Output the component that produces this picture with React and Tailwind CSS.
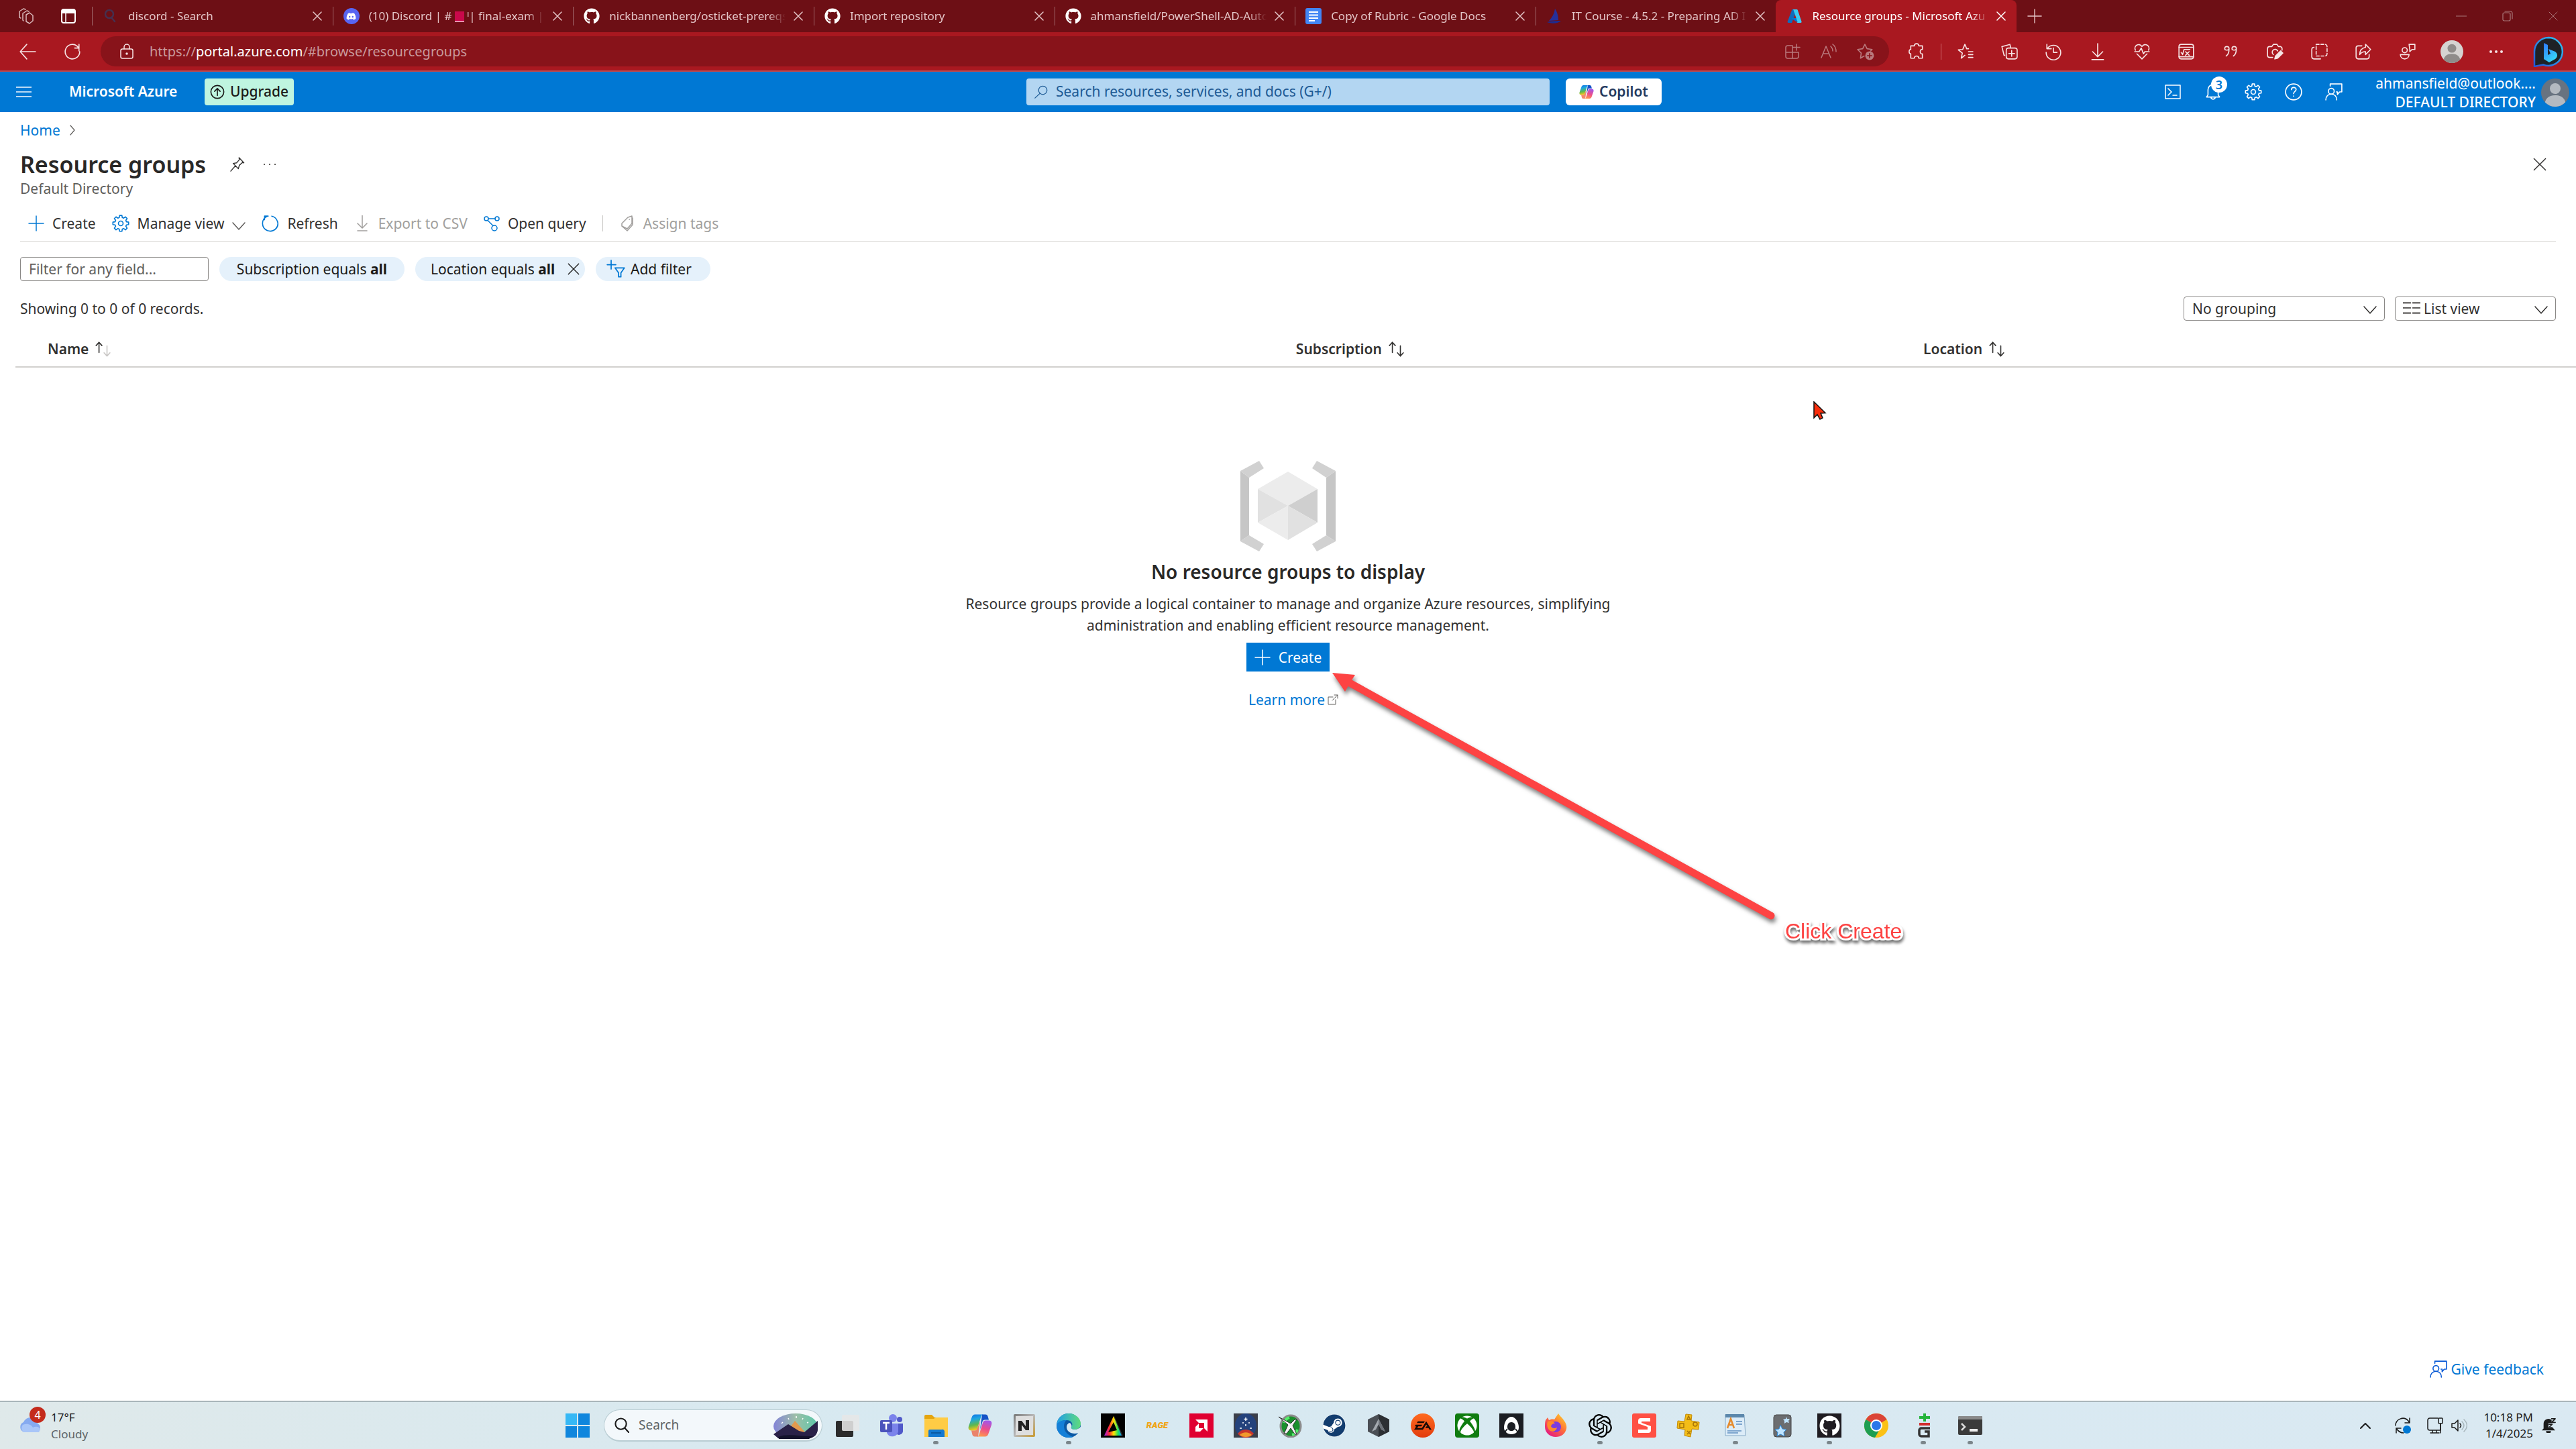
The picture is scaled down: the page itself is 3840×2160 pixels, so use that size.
import React from "react";
import { FaGithub, FaDiscord, FaXbox, FaSteam } from "react-icons/fa";
import { SiOpenai, SiEa } from "react-icons/si";

/* ---------- icon helpers ---------- */

function Line({ size = 24, sw = 1.5, className = "", children, box = 24 }) {
  return (
    <svg
      width={size}
      height={size}
      viewBox={`0 0 ${box} ${box}`}
      fill="none"
      stroke="currentColor"
      strokeWidth={sw}
      strokeLinecap="round"
      strokeLinejoin="round"
      className={`shrink-0 ${className}`}
      aria-hidden="true"
    >
      {children}
    </svg>
  );
}

const Close = ({ size = 14, sw = 1.5, className }) => (
  <Line size={size} sw={sw} box={14} className={className}>
    <path d="M1 1l12 12M13 1L1 13" />
  </Line>
);
const Plus = ({ size = 24, sw = 1.5, className }) => (
  <Line size={size} sw={sw} className={className}>
    <path d="M12 1v22M1 12h22" />
  </Line>
);
const ChevronDown = ({ className }) => (
  <Line size={20} box={20} sw={1.5} className={className}>
    <path d="M1 5l9 10 9-10" />
  </Line>
);
const Gear = ({ size = 26, sw = 1.5, className }) => (
  <Line size={size} sw={sw} className={className}>
    <circle cx="12" cy="12" r="3.2" />
    <path d="M10.400 1h3.200l.5 3 1.900.8L18.500 3l2.300 2.300L19 7.900l.8 1.900 3 .5v3.300l-3 .5-.8 1.900 1.800 2.600-2.300 2.300-2.500-1.800-1.900.8-.5 3h-3.200l-.5-3-1.900-.8-2.500 1.800-2.300-2.300L5 16l-.8-1.900-3-.5v-3.300l3-.5L5 7.900 3.200 5.300 5.500 3 8 4.800 9.900 4z" />
  </Line>
);
const Feedback = ({ size = 24, sw = 1.5, className }) => (
  <Line size={size} sw={sw} className={className}>
    <path d="M7 4V1h16v11h-3l-3 3.500V12h-1.500" />
    <circle cx="8.500" cy="11" r="4" />
    <path d="M1 23c0-5 3.300-8 7.500-8s7.500 3 7.500 8" />
  </Line>
);

const CopilotLogo = ({ size = 24, id }) => (
  <svg width={size} height={size} viewBox="0 0 36 36" className="shrink-0" aria-hidden="true">
    <defs>
      <linearGradient id={`${id}a`} x1="0" y1="0" x2="0.2" y2="1">
        <stop offset="0" stopColor="#0f6fe8" />
        <stop offset="0.35" stopColor="#1ea7e0" />
        <stop offset="0.7" stopColor="#5fb84f" />
        <stop offset="1" stopColor="#f2c81c" />
      </linearGradient>
      <linearGradient id={`${id}b`} x1="0.6" y1="0" x2="0.3" y2="1">
        <stop offset="0" stopColor="#a357e8" />
        <stop offset="0.5" stopColor="#ec4d8c" />
        <stop offset="1" stopColor="#ff9a4a" />
      </linearGradient>
    </defs>
    <path d="M21 1.500h5c2 0 3 1.200 3.600 3l1.400 5h-6c-2 0-3 1-3.600 3L18 24" fill="#1553c7" />
    <path d="M10.500 1.500H23c-2 0-3 1.500-3.500 3L14 22c-.8 2.500-2 3.500-4.500 3.500H5c-4 0-5-3-4-6.500L5.500 6c1-3 2.500-4.500 5-4.500z" fill={`url(#${id}a)`} />
    <path d="M25.500 34.500H13c2 0 3-1.500 3.500-3L22 14c.8-2.500 2-3.500 4.500-3.500H31c4 0 5 3 4 6.500L30.500 30c-1 3-2.500 4.500-5 4.500z" fill={`url(#${id}b)`} />
    <path d="M15 34.500h-5c-2 0-3-1.200-3.600-3L5 25.500h5c2 0 3-1 3.600-3L18 12" fill="#f0603c" opacity=".75" />
  </svg>
);

const Avatar = ({ size, bg, fg }) => (
  <svg width={size} height={size} viewBox="0 0 42 42" className="shrink-0 rounded-full" aria-hidden="true">
    <rect width="42" height="42" fill={bg} />
    <circle cx="21" cy="15" r="8" fill={fg} />
    <path d="M5 42c0-12 6-17 16-17s16 5 16 17z" fill={fg} />
  </svg>
);

/* ---------- browser tabs ---------- */

const GithubFav = () => <FaGithub size={24} className="shrink-0 text-white" />;

const TABS = [
  {
    title: "discord - Search",
    icon: (
      <Line size={24} sw={2.5} className="text-[#46304f]">
        <circle cx="10" cy="9" r="6" />
        <path d="M13 14l5 6" />
      </Line>
    ),
  },
  {
    title: (
      <>
        (10) Discord | # <span className="inline-block h-4 w-3.5 border-b border-white bg-[#c9094b] align-middle" /> ᑊ| final-exam |
      </>
    ),
    icon: (
      <span className="flex size-6 shrink-0 items-center justify-center rounded-full bg-[#5865f2] text-white">
        <FaDiscord size={15} />
      </span>
    ),
  },
  { title: "nickbannenberg/osticket-prereqs", icon: <GithubFav /> },
  { title: "Import repository", icon: <GithubFav /> },
  { title: "ahmansfield/PowerShell-AD-Auto", icon: <GithubFav /> },
  {
    title: "Copy of Rubric - Google Docs",
    icon: (
      <svg width="24" height="24" viewBox="0 0 24 24" className="shrink-0" aria-hidden="true">
        <rect width="24" height="24" rx="3" fill="#4285f4" />
        <path d="M5 6h14M5 10.500h14M5 15h14M5 19h9" stroke="#fff" strokeWidth="2.200" />
      </svg>
    ),
  },
  {
    title: "IT Course - 4.5.2 - Preparing AD I",
    icon: (
      <svg width="24" height="24" viewBox="0 0 24 24" className="shrink-0" aria-hidden="true">
        <path d="M13 1c4 6 5 12 5 17l-14 1C9 14 12 8 13 1z" fill="#25309b" />
        <path d="M1 21c7-2 14-2 21-2-4 4-12 5-21 2z" fill="#1e2b8f" />
      </svg>
    ),
  },
  {
    title: "Resource groups - Microsoft Azu",
    active: true,
    icon: (
      <svg width="24" height="24" viewBox="0 0 24 24" className="shrink-0" aria-hidden="true">
        <path d="M8.500 2h7L8 22H3c-1 0-1.700-.9-1.300-2z" fill="#0f6cbd" />
        <path d="M8 15h10l-2 6-8-5z" fill="#0078d4" />
        <path d="M9.500 2h6c.6 0 1 .3 1.200.8L22.500 20c.4 1-.3 2-1.300 2H15c1 0 1.600-1 1.300-2L10.500 3c-.2-.6-.5-1-1-1z" fill="#3ccbf4" />
      </svg>
    ),
  },
];

function TabStrip() {
  return (
    <div className="flex h-12 items-center bg-[#6d0f15] text-[#e3c4c6]">
      <div className="flex w-[137px] shrink-0 items-center gap-[39px] pl-[27px]">
        <Line size={24} sw={1.5} className="text-[#d9b9bb]">
          <path d="M12 10l5-3 5 4v8l-5 4-5-3zM8 19l-1-1V8l6-4 3 1M4 15l-2-1V5l6-4 3 1" />
        </Line>
        <svg width="24" height="24" viewBox="0 0 24 24" className="shrink-0" aria-hidden="true">
          <rect x="2" y="2" width="20" height="20" rx="3" fill="none" stroke="#fff" strokeWidth="2" />
          <path d="M2 3h20v5H2z" fill="#fff" />
          <path d="M8 8v13" stroke="#fff" strokeWidth="1.500" />
        </svg>
      </div>
      <div className="grid w-[2869px] min-w-0 grid-cols-8 self-stretch">
        {TABS.map((t, i) => (
          <div
            key={i}
            className={
              t.active
                ? "flex min-w-0 items-center rounded-t-lg bg-[#a91820] text-white"
                : "flex min-w-0 items-center"
            }
          >
            <span className={t.active ? "h-7 w-px shrink-0" : "h-7 w-px shrink-0 bg-[#a0676b]"} />
            <button className="flex min-w-0 flex-1 items-center gap-3.5 pl-[15px] text-left">
              {t.icon}
              <span className="min-w-0 flex-1 overflow-hidden whitespace-nowrap text-[17px] leading-6 [mask-image:linear-gradient(to_right,black_90%,transparent)]">
                {t.title}
              </span>
            </button>
            <button aria-label="Close tab" className="mr-4 ml-3 shrink-0">
              <Close />
            </button>
          </div>
        ))}
      </div>
      <button aria-label="New tab" className="ml-4 shrink-0">
        <Plus size={22} />
      </button>
      <div className="ml-auto flex items-center gap-[53px] pr-[27px] text-[#a9787b]">
        <button aria-label="Minimize">
          <Line size={16} box={16} sw={1}>
            <path d="M0 8h16" />
          </Line>
        </button>
        <button aria-label="Restore">
          <Line size={16} box={16} sw={1.2}>
            <rect x="1" y="3" width="11" height="12" rx="2" />
            <path d="M4 1h8a3 3 0 013 3v8" />
          </Line>
        </button>
        <button aria-label="Close window">
          <Close sw={1} />
        </button>
      </div>
    </div>
  );
}

/* ---------- address bar ---------- */

const TOOLBAR = [
  ["Favorites", <><path d="M12 17l-5 4 1.500-7L3 9.500l6-.5 3-7 2.500 6h2.500M17 12h6M17 16h6M17 20h6" /></>],
  ["Collections", <><path d="M6 17H5L2 5l11-3 1 4" /><rect x="8" y="7" width="15" height="15" rx="3" /><path d="M15.500 10.500v8M11.500 14.500h8" /></>],
  ["History", <><path d="M3 2v6h6M3.500 8A10 10 0 112 13M12 7v6h5" /></>],
  ["Downloads", <><path d="M12 1v17M5 12l7 7 7-7M4 23h16" /></>],
  ["Performance", <><path d="M3 10C0 4 8-1 12 5c4-6 12-1 9 5M5 15l7 7 7-7M2 12h6l3-5 3 8 2-3h6" /></>],
  ["Math solver", <><rect x="2" y="2" width="20" height="20" rx="3" /><path d="M2 6h20M2 19h20M5 13l2 3 2-7h8M11 12l5 5M16 12l-5 5" /></>],
  ["Citations", <><path d="M4 8a3 3 0 116 0c0 5-1 8-4 10M10 8c0 2-6 3-6 0M14 8a3 3 0 116 0c0 5-1 8-4 10M20 8c0 2-6 3-6 0" /></>],
  ["Screenshot", <><path d="M9 20H5a3 3 0 01-3-3V8a3 3 0 013-3h3l2-3h5l2 3h3a3 3 0 012 3v2M10 16a4 4 0 116-5" /><path d="M13 18l7-7 3 3-7 7-4 1z" fill="currentColor" /></>],
  ["Web select", <><path d="M8 2h12a3 3 0 013 3v10a3 3 0 01-3 3H8z" strokeDasharray="4 2.500" /><path d="M5 6a3 3 0 00-3 3v10a3 3 0 003 3h9" /></>],
  ["Share", <><path d="M10 4H5a3 3 0 00-3 3v12a3 3 0 003 3h12a3 3 0 003-3v-3M15 2l7 7-7 7v-4c-4 0-6 1-8 4 0-6 3-9 8-10z" /></>],
  ["Social", <><circle cx="8" cy="10" r="3.500" /><path d="M2 16h12c0 8-12 8-12 0zM14 2h8v7h-4l-3 3V9z" /></>],
];

function AddressBar() {
  return (
    <div className="flex h-[59px] items-center border-b-2 border-[#bb4a50] bg-[#a91820] text-[#f6e3e4]">
      <div className="flex w-[150px] shrink-0 items-center gap-[41px] pl-7">
        <button aria-label="Back">
          <Line size={26}>
            <path d="M23 12H2M11 2L2 12l9 10" />
          </Line>
        </button>
        <button aria-label="Reload">
          <Line size={26}>
            <path d="M21 5v6M22 12a10 10 0 11-4-8l3 3M21 2v5h-6" />
          </Line>
        </button>
      </div>
      <div className="flex h-[45px] min-w-0 flex-1 items-center rounded-full bg-[#88131a] pr-[22px] pl-[27px]">
        <Line size={24}>
          <rect x="3" y="8" width="18" height="14" rx="2.500" />
          <path d="M8 8V5a4 4 0 018 0v3" />
          <circle cx="12" cy="15" r="1" fill="currentColor" />
        </Line>
        <a href="#browse" className="ml-[22px] flex-1 truncate text-xl text-[#c9999c]">
          https://<span className="text-white">portal.azure.com</span>/#browse/resourcegroups
        </a>
        <div className="flex items-center gap-[30px] text-[#b9797d]">
          <button aria-label="App available">
            <Line size={24}>
              <path d="M12 3H5a3 3 0 00-3 3v13a3 3 0 003 3h13a3 3 0 003-3v-6H2M12 3v19M18 1v9M13 5.500h10" />
            </Line>
          </button>
          <button aria-label="Read aloud">
            <Line size={24}>
              <path d="M1 21L8 4l7 17M4 15h8M15 4c2 2 3 4 3 7M18 1c4 3 5 6 5 11" />
            </Line>
          </button>
          <button aria-label="Add to favorites">
            <Line size={26}>
              <path d="M10 18l-5 3 1-7-5-5 7-1 3-6 3 6 7 1-2 2" />
              <circle cx="17.500" cy="17.500" r="6" fill="currentColor" stroke="none" />
              <path d="M17.500 14.500v6M14.500 17.500h6" stroke="#88131a" />
            </Line>
          </button>
        </div>
      </div>
      <div className="flex shrink-0 items-center pl-7">
        <button aria-label="Extensions">
          <Line size={26}>
            <path d="M9 4a3 3 0 016 0h5v5c-4-1-4 7 0 6v6h-5c0-4-6-4-6 0H4v-6c-3 0-3-6 0-6V4z" />
          </Line>
        </button>
        <span className="mr-0.5 ml-[23px] h-6 w-px bg-[#cf6a70]" />
        {TOOLBAR.map(([label, path]) => (
          <button key={label} aria-label={label} className="flex w-[66px] justify-center">
            <Line size={26}>{path}</Line>
          </button>
        ))}
        <button aria-label="Profile" className="flex w-[66px] justify-center">
          <Avatar size={34} bg="#d5d3d1" fg="#8f8c8a" />
        </button>
        <button aria-label="More" className="flex w-[66px] justify-center">
          <Line size={24} sw={0}>
            <g fill="currentColor">
              <circle cx="4" cy="12" r="2" />
              <circle cx="12" cy="12" r="2" />
              <circle cx="20" cy="12" r="2" />
            </g>
          </Line>
        </button>
        <button aria-label="Bing chat" className="mr-[18px] ml-[22px]">
          <svg width="46" height="46" viewBox="0 0 46 46" aria-hidden="true">
            <defs>
              <linearGradient id="bingRing" x1="0" y1="1" x2="1" y2="0">
                <stop offset="0" stopColor="#2356d8" />
                <stop offset="1" stopColor="#35c5f0" />
              </linearGradient>
              <linearGradient id="bingB" x1="0" y1="0" x2="0.6" y2="1">
                <stop offset="0" stopColor="#2f7bff" />
                <stop offset="1" stopColor="#37d6f5" />
              </linearGradient>
            </defs>
            <path d="M23 2a21 21 0 11-8 40.500L2 45V23A21 21 0 0123 2z" fill="#1e2226" stroke="url(#bingRing)" strokeWidth="2.500" />
            <path d="M16 10l6 3v15l4-2-3-7 10 4c4 3 4 8 0 11l-9 5-8-5z" fill="url(#bingB)" />
          </svg>
        </button>
      </div>
    </div>
  );
}

/* ---------- portal header ---------- */

function PortalHeader() {
  return (
    <header className="flex h-[60px] items-center bg-[#0078d4] text-white">
      <div className="flex flex-1 items-center">
        <button aria-label="Menu" className="ml-6 flex w-[23px] flex-col gap-[5px]">
          <span className="h-0.5 bg-[#b9d9f3]" />
          <span className="h-0.5 bg-[#b9d9f3]" />
          <span className="h-0.5 bg-[#b9d9f3]" />
        </button>
        <a href="#home" className="ml-14 w-[202px] text-[21px] font-semibold whitespace-nowrap">
          Microsoft Azure
        </a>
        <button className="flex h-10 items-center gap-2 rounded-sm bg-[#bff5e0] px-2 text-[21px] font-medium text-[#1b1a19]">
          <Line size={22} sw={1.8}>
            <circle cx="12" cy="12" r="10.500" />
            <path d="M12 18V7M7.500 11L12 6.500l4.500 4.500" />
          </Line>
          Upgrade
        </button>
      </div>
      <label className="flex h-10 w-[780px] shrink-0 items-center gap-3 rounded-sm bg-[#b3d6f2] px-3 text-[#1d5a94]">
        <Line size={20}>
          <circle cx="15" cy="9" r="7.500" />
          <path d="M10 14.500L1 23" />
        </Line>
        <input
          type="text"
          aria-label="Search resources, services, and docs"
          placeholder="Search resources, services, and docs (G+/)"
          className="w-full bg-transparent text-[21px] outline-none placeholder:text-[#1d5a94]"
        />
      </label>
      <div className="flex flex-1 items-center">
        <button className="ml-6 flex h-10 items-center gap-2 rounded-md bg-white px-5 text-[21px] font-semibold text-[#243a5e]">
          <CopilotLogo size={22} id="cpH" />
          Copilot
        </button>
        <div className="ml-auto flex items-center">
          <button aria-label="Cloud Shell" className="flex w-[60px] justify-center">
            <Line size={24}>
              <rect x="1" y="2" width="22" height="20" />
              <path d="M5 7l5 5-5 5M12 17h6" />
            </Line>
          </button>
          <button aria-label="Notifications" className="relative flex w-[60px] justify-center">
            <Line size={26}>
              <path d="M3 19h18l-2-3V9a7 7 0 00-14 0v7zM9 19a3 3 0 006 0" />
            </Line>
            <span className="absolute -top-2.5 left-[27px] flex size-6 items-center justify-center rounded-full bg-white text-lg font-semibold text-[#0078d4]">
              3
            </span>
          </button>
          <button aria-label="Settings" className="flex w-[60px] justify-center">
            <Gear />
          </button>
          <button aria-label="Help" className="flex w-[60px] justify-center">
            <Line size={26}>
              <circle cx="12" cy="12" r="11" />
              <path d="M9 9c0-4 6.500-4 6.500-.5 0 3-3.500 3-3.500 6M12 17.500v.5" />
            </Line>
          </button>
          <button aria-label="Feedback" className="flex w-[60px] justify-center">
            <Feedback size={26} />
          </button>
          <button className="flex w-[321px] items-center justify-end gap-2 pt-0.5 text-right text-[21px] leading-7">
            <span>
              <span className="block">ahmansfield@outlook....</span>
              <span className="block font-medium">DEFAULT DIRECTORY</span>
            </span>
            <Avatar size={42} bg="#687380" fg="#b4bac1" />
          </button>
          <span className="w-2.5" />
        </div>
      </div>
    </header>
  );
}

/* ---------- page ---------- */

function Command({ icon, children, disabled, className = "" }) {
  return (
    <button
      disabled={disabled}
      className={`flex items-center gap-3 whitespace-nowrap ${disabled ? "text-[#a19f9d]" : ""} ${className}`}
    >
      {icon}
      {children}
    </button>
  );
}

function Sort({ dim }) {
  return (
    <Line size={26} sw={1.5} className="text-[#323130]">
      <path d="M7 17V3M3 7.500L7 3l4 4.500" />
      <path d="M18 8v14M14 17.500l4 4.500 4-4.500" className={dim ? "text-[#c8c6c4]" : ""} stroke="currentColor" />
    </Line>
  );
}

function EmptyArt() {
  return (
    <svg width="142" height="135" viewBox="0 0 142 135" aria-hidden="true">
      <path d="M0 15l13 10v86L0 120z" fill="#c6c6c6" />
      <path d="M142 15l-14 10v86l14 9z" fill="#c6c6c6" />
      <path d="M0 15L28 0l7 11-22 14zM142 15L114 0l-7 11 21 14zM0 120l28 15 7-11-22-13zM142 120l-28 15-7-11 21-13z" fill="#d1d1d1" />
      <path d="M26 42l45-26 44 26-44 25z" fill="#ececec" />
      <path d="M26 42l45 25-45 25z" fill="#e1e1e1" />
      <path d="M115 42L71 67l44 25z" fill="#cfcfcf" />
      <path d="M26 92l45-25v51z" fill="#ececec" />
      <path d="M115 92L71 67v51z" fill="#e1e1e1" />
    </svg>
  );
}

function Annotations() {
  return (
    <>
      <svg
        width="680"
        height="390"
        viewBox="0 0 680 390"
        className="pointer-events-none absolute top-[831px] left-1/2 ml-[60px] drop-shadow-[2px_5px_3px_rgba(0,0,0,0.5)]"
        aria-hidden="true"
      >
        <path d="M32 20L660 367" stroke="#fd4343" strokeWidth="11" strokeLinecap="round" />
        <path d="M6 5l34 3-7 11-8 14z" fill="#fd4343" />
      </svg>
      <span className="pointer-events-none absolute top-[1203px] left-1/2 ml-[741px] text-[32px] leading-9 whitespace-nowrap text-[#fd4343] [font-family:'Liberation_Sans',sans-serif] [paint-order:stroke_fill] [-webkit-text-stroke:6px_white] drop-shadow-[1px_4px_2px_rgba(0,0,0,0.55)]">
        Click Create
      </span>
      <svg
        width="20"
        height="29"
        viewBox="0 0 20 29"
        className="pointer-events-none absolute top-[431px] left-1/2 ml-[783px]"
        aria-hidden="true"
      >
        <path d="M1 1v24l5-5 4 7 4-2-3-7 7-.500z" fill="#f92d0b" stroke="#111" strokeWidth="1.500" />
      </svg>
    </>
  );
}

function Page() {
  return (
    <main className="relative flex flex-1 flex-col bg-white text-[21px] leading-7 text-[#323130]">
      <nav className="flex h-[54px] items-center gap-2.5 pl-[30px]">
        <a href="#home" className="text-[#0078d4]">
          Home
        </a>
        <Line size={16} box={16} sw={1.2} className="text-[#605e5c]">
          <path d="M5 1l6 7-6 7" />
        </Line>
      </nav>
      <div className="flex h-12 items-center pr-11 pl-[30px]">
        <h1 className="text-[34px] leading-[48px] font-semibold text-[#292827]">Resource groups</h1>
        <button aria-label="Pin" className="ml-9">
          <Line size={22} sw={1.5}>
            <path d="M1 23l7.500-8.500M5 10.500l8.500 8.500 1.500-5.500L20 9l2.500.5L14.500 1l.5 3.500-4.500 5z" />
          </Line>
        </button>
        <button aria-label="More actions" className="ml-7 flex gap-1.5">
          <span className="size-0.5 bg-[#605e5c]" />
          <span className="size-0.5 bg-[#605e5c]" />
          <span className="size-0.5 bg-[#605e5c]" />
        </button>
        <button aria-label="Close" className="ml-auto">
          <Close size={20} sw={1} />
        </button>
      </div>
      <p className="h-6 pl-[30px] leading-6 text-[#605e5c]">Default Directory</p>

      <div className="mx-[30px] flex h-[67px] items-center border-b border-[#d2d0ce] pt-3.5 pl-3">
        <Command icon={<Plus className="text-[#0078d4]" />}>Create</Command>
        <Command className="ml-6" icon={<Gear className="text-[#0078d4]" />}>
          Manage view
          <ChevronDown className="mt-2 text-[#605e5c]" />
        </Command>
        <Command
          className="ml-6"
          icon={
            <Line size={26} className="text-[#0078d4]">
              <path d="M9 2H4v5M8 2C-1 6-1 18 8 22c9 3 16-5 14-12-1-4-4-7-8-8" />
            </Line>
          }
        >
          Refresh
        </Command>
        <Command
          disabled
          className="ml-6"
          icon={
            <Line size={24}>
              <path d="M12 0v18M5 12l7 7 7-7M5 23h14" />
            </Line>
          }
        >
          Export to CSV
        </Command>
        <Command
          className="ml-6"
          icon={
            <Line size={24} className="text-[#0078d4]">
              <circle cx="4" cy="5" r="3" />
              <circle cx="20" cy="5" r="3" />
              <circle cx="16" cy="19" r="4" />
              <path d="M7 5h10M6 7.500l8 8" />
            </Line>
          }
        >
          Open query
        </Command>
        <span className="mx-6 h-6 w-px bg-[#c8c6c4]" />
        <Command
          disabled
          icon={
            <Line size={24}>
              <path d="M4 12l9-9 6-2v11l-7 8-8-4zM4 16l8 7 8-9V4M15 6h.5" />
            </Line>
          }
        >
          Assign tags
        </Command>
      </div>

      <div className="mx-[30px] mt-[23px] flex h-9 items-stretch">
        <input
          type="text"
          aria-label="Filter"
          placeholder="Filter for any field..."
          className="w-[281px] rounded-sm border border-[#8a8886] px-3 outline-none placeholder:text-[#605e5c]"
        />
        <button className="ml-4 w-[276px] rounded-full bg-[#e5f1fb] whitespace-nowrap text-[#1b1a19]">
          Subscription equals <b className="font-bold">all</b>
        </button>
        <div className="ml-4 flex w-[253px] items-center justify-between rounded-full bg-[#e5f1fb] pr-2 pl-[23px] whitespace-nowrap text-[#1b1a19]">
          <button>
            Location equals <b className="font-bold">all</b>
          </button>
          <button aria-label="Remove location filter">
            <Close size={18} sw={1} />
          </button>
        </div>
        <button className="ml-4 flex w-[171px] items-center gap-2 rounded-full bg-[#e5f1fb] pl-4 whitespace-nowrap text-[#1b1a19]">
          <Line size={28} className="text-[#0078d4]">
            <path d="M6 1v11M1 6.500h11M11 10.500h12l-4.500 6.500v5h-3v-5z" />
          </Line>
          Add filter
        </button>
      </div>

      <div className="mt-[23px] flex h-9 items-center pr-[30px] pl-[30px]">
        <p className="mr-auto">Showing 0 to 0 of 0 records.</p>
        <div className="relative mr-[15px] w-[300px]">
          <select aria-label="Grouping" className="h-9 w-full appearance-none rounded-sm border border-[#8a8886] bg-white pl-3">
            <option>No grouping</option>
          </select>
          <ChevronDown className="pointer-events-none absolute top-2.5 right-3" />
        </div>
        <div className="relative w-60">
          <select aria-label="View" className="h-9 w-full appearance-none rounded-sm border border-[#8a8886] bg-white pl-[42px]">
            <option>List view</option>
          </select>
          <Line size={26} sw={2} className="pointer-events-none absolute top-1 left-3 text-[#605e5c]">
            <path d="M0 5h11M13 5h11M0 12h11M13 12h11M0 19h11M13 19h11" strokeLinecap="butt" />
          </Line>
          <ChevronDown className="pointer-events-none absolute top-2.5 right-3" />
        </div>
      </div>

      <div className="mt-4 pl-[23px]">
        <table className="w-full table-fixed border-b-2 border-[#d2d0ce] text-left">
          <colgroup>
            <col className="w-[49.800%]" />
            <col className="w-[24.500%]" />
            <col />
          </colgroup>
          <thead>
            <tr className="h-[53px]">
              {["Name", "Subscription", "Location"].map((h, i) => (
                <th key={h} className={i === 0 ? "pl-12 font-semibold" : "pl-2 font-semibold"}>
                  <button className="flex items-center gap-2">
                    {h}
                    <Sort dim={i === 0} />
                  </button>
                </th>
              ))}
            </tr>
          </thead>
        </table>
      </div>

      <section className="mt-[139px] flex flex-col items-center text-center">
        <EmptyArt />
        <h2 className="mt-3 text-[28px] leading-9 font-semibold text-[#292827]">No resource groups to display</h2>
        <p className="mt-3.5 w-[1000px] leading-8">
          Resource groups provide a logical container to manage and organize Azure resources, simplifying administration and
          enabling efficient resource management.
        </p>
        <button className="mt-2.5 flex h-[43px] items-center gap-3 bg-[#0078d4] px-3 text-white">
          <Plus />
          Create
        </button>
        <a href="#learn" className="mt-7 ml-4 flex items-center gap-1 text-[#0078d4]">
          Learn more
          <Line size={16} box={16} sw={1} className="text-[#605e5c]">
            <path d="M8 4H1v11h11V8M7 9l8-8M10 1h5v5" />
          </Line>
        </a>
      </section>

      <a href="#feedback" className="mt-auto mr-12 mb-[33px] flex items-center gap-1.5 self-end text-[#0078d4]">
        <Feedback size={26} className="text-[#0a5bd6]" />
        Give feedback
      </a>
      <Annotations />
    </main>
  );
}

/* ---------- taskbar ---------- */

const Ico = ({ children, size = 36 }) => (
  <svg width={size} height={size} viewBox="0 0 36 36" className="shrink-0" aria-hidden="true">
    {children}
  </svg>
);

const APPS = [
  ["Task view", <Ico><rect x="1" y="11" width="26" height="24" rx="2" fill="#2b2b2b" /><rect x="10" y="2" width="26" height="24" rx="2" fill="#e6e6e6" opacity=".88" /></Ico>],
  ["Teams", <Ico><circle cx="20" cy="7" r="6" fill="#7b83eb" /><circle cx="30" cy="9" r="4" fill="#5059c9" /><path d="M24 15h11v10a6 6 0 01-9 6z" fill="#5059c9" /><path d="M11 15h17v12a9 9 0 01-17 2z" fill="#7b83eb" /><rect x="1" y="10" width="18" height="18" rx="2" fill="#4b53bc" /><path d="M5 14h10M10 14v10" stroke="#fff" strokeWidth="2.500" /></Ico>],
  ["File Explorer", <Ico><path d="M1 4a2 2 0 012-2h9l4 4h17a3 3 0 013 3v26H1z" fill="#e5a50f" /><path d="M1 8h14l3-2h18v29H1z" fill="#ffcc45" /><path d="M7 35V26a2 2 0 012-2h18a3 3 0 014 3v8z" fill="#1279d2" /><path d="M11 29h15" stroke="#084f91" strokeWidth="1.500" /></Ico>, true],
  ["Copilot", <CopilotLogo size={36} id="cpT" />],
  ["N launcher", <Ico><defs><linearGradient id="nl" x1="0" y1="0" x2="1" y2="1"><stop offset="0" stopColor="#777" /><stop offset=".5" stopColor="#b9b9b9" /><stop offset="1" stopColor="#c99a2e" /></linearGradient></defs><rect x="2" y="1" width="32" height="34" rx="2" fill="url(#nl)" /><rect x="5" y="4" width="26" height="28" fill="#dedede" /><path d="M9 26V11h5l6 8v-9h5v15h-5l-6-8v9z" fill="#222" /></Ico>],
  ["Edge", <Ico><defs><linearGradient id="eg1" x1="0" x2="1"><stop offset="0" stopColor="#1f9ee8" /><stop offset="1" stopColor="#5fdc7c" /></linearGradient></defs><circle cx="18" cy="18" r="18" fill="#0c59a4" /><path d="M0 18C1 7 8 0 18 0c11 0 18 8 18 15 0 6-4 9-9 9-4 0-6-2-5-4 4-5-1-10-7-10C8 10 1 13 0 18z" fill="url(#eg1)" /><path d="M0 18c1-5 7-8 15-8-6 4-7 20 10 25C12 39 0 31 0 18z" fill="#1480d8" /><path d="M22 20c-1 2 1 4 5 4 4 0 7-2 9-4v6l-3 3c-9 3-18-1-18-9 0-3 2-5 4-6 3 1 4 4 3 6z" fill="#d7e9f2" /></Ico>, true],
  ["Prism", <Ico><defs><linearGradient id="pr1" x1="0" x2="1"><stop offset="0" stopColor="#a020f0" /><stop offset=".3" stopColor="#ff2d2d" /><stop offset=".55" stopColor="#ffe600" /><stop offset=".8" stopColor="#20e060" /><stop offset="1" stopColor="#1090ff" /></linearGradient></defs><rect width="36" height="36" fill="#000" /><path d="M20 4l13 29h-9z" fill="#2a2a2a" /><path d="M19 4l12 29H5z" fill="url(#pr1)" /><path d="M19 13l5 12-13 3z" fill="#000" /></Ico>],
  ["Rage", <span className="text-[13px] font-black text-[#f0a416] italic [font-family:'Roboto',sans-serif]">RAGE</span>],
  ["AMD", <Ico><rect width="36" height="36" fill="#e00031" /><path d="M9 9h18v18l-5-5v-8h-8z" fill="#fff" /><path d="M9 20l5-5v7h7l-5 5H9z" fill="#fff" /></Ico>],
  ["Starfield", <Ico><rect width="36" height="36" fill="#3b3f4a" /><ellipse cx="18" cy="18" rx="16" ry="18" fill="#24427c" /><path d="M6 30c6-8 18-8 24 0-6 8-18 8-24 0z" fill="#c8352c" /><path d="M9 32c5-5 13-5 18 0-4 4-14 4-18 0z" fill="#f09a2c" /><path d="M18 6v5M15.500 8.500h5M18 16v3M9 22h3M24 22h3M13 14h2M22 14h2" stroke="#fff" strokeWidth="1.500" /></Ico>],
  ["X mouse", <Ico><ellipse cx="19" cy="19" rx="15" ry="16" fill="#1a8f2c" stroke="#8b8b8b" strokeWidth="3" /><path d="M9 14a12 12 0 018-8M29 24a12 12 0 01-8 8" stroke="#52f06a" strokeWidth="4" fill="none" /><path d="M1 5l14 12-6 13h4l6-8 6 9h3l-6-13 6-9h-3l-6 6z" fill="#f3f3f3" stroke="#333" /></Ico>],
  ["Steam", <span className="flex size-[34px] items-center justify-center rounded-full bg-white"><FaSteam size={34} className="text-[#123c6e]" /></span>],
  ["Armoury Crate", <Ico><path d="M18 1l16 8v18l-16 8-16-8V9z" fill="#4b4f55" /><path d="M18 1l16 8v18l-16 8z" fill="#2c2f33" /><path d="M18 8l10 19-6-3-4-8-4 8-6 3z" fill="#a4a9af" /><path d="M18 8l10 19-6-3-4-8z" fill="#6c7178" /></Ico>],
  ["EA", <span className="flex size-9 items-center justify-center rounded-full bg-linear-to-b from-[#ff6a1f] to-[#e23b0e]"><SiEa size={26} className="text-[#160a06]" /></span>],
  ["Xbox", <span className="flex size-9 items-center justify-center rounded-sm bg-[#107c10]"><FaXbox size={30} className="text-white" /></span>],
  ["Alienware", <Ico><rect width="36" height="36" fill="#1b1d22" /><path d="M18 5c6 0 11 8 11 16 0 6-5 10-11 10S7 27 7 21C7 13 12 5 18 5z" fill="#fff" /><path d="M18 13c4 0 6 3 6 7s-3 6-6 6-6-2-6-6 2-7 6-7z" fill="#1b1d22" /><path d="M12 23l-4 5M24 23l4 5" stroke="#1b1d22" strokeWidth="2" /></Ico>],
  ["Firefox", <Ico><defs><linearGradient id="ff1" x1="1" y1="0" x2=".2" y2="1"><stop offset="0" stopColor="#ffe226" /><stop offset=".5" stopColor="#ff7139" /><stop offset="1" stopColor="#e31587" /></linearGradient></defs><path d="M3 10l3-4 2 4c2-1 5-2 8-1 2-3 4-6 6-9 2 4 5 5 8 10 3 4 5 8 4 13-2 8-8 12-16 12S2 29 2 20c0-4 0-7 1-10z" fill="url(#ff1)" /><circle cx="18" cy="20" r="8" fill="#7b3be0" /><path d="M6 12c5-2 9 0 11 3-4 0-5 2-6 4 1 3 5 4 9 2-1 5-6 7-10 5-4-3-6-8-4-14z" fill="#ff8a2a" /></Ico>],
  ["ChatGPT", <SiOpenai size={35} className="text-black" />, true],
  ["Snagit", <Ico><rect width="36" height="36" rx="3" fill="#ff5044" /><path d="M27 7H13a4 4 0 00-4 4v4l14 5v4H9v5h15a4 4 0 004-4v-6l-14-5v-2h13z" fill="#fff" /></Ico>],
  ["PlayStation Plus", <Ico><path d="M14 1l9 1-1 9 12 2-1 11-10-1-2 12-9-2 1-9-12-2 1-11 10 1z" fill="#f3bd18" stroke="#c28a08" /><path d="M18 4l3 5h-5zM5 15h6v6H5zM16 26l5 5M21 26l-5 5" fill="none" stroke="#a87407" strokeWidth="1.500" /><circle cx="28" cy="16" r="3" fill="none" stroke="#a87407" strokeWidth="1.500" /></Ico>],
];

const APPS_END = [
  ["WordPad", <Ico><path d="M3 2h28l2 31H3z" fill="#dcecf8" stroke="#86a9c6" /><rect x="3" y="1" width="28" height="5" fill="#5b87ab" /><path d="M6 22l5-14 5 14M8 17h6" fill="none" stroke="#e58a2b" strokeWidth="2.500" /><path d="M19 12h9M19 16h9M6 26h21M6 29h16" stroke="#5f8fc0" strokeWidth="1.300" /></Ico>, true],
  ["Anki", <Ico><rect x="5" y="2" width="26" height="33" rx="4" fill="#6b6d70" stroke="#444" /><path d="M15 17l3 6 6 1-4 4 1 6-6-3-5 3 1-6-4-4 6-1z" fill="#bfe4ff" stroke="#2b83cf" /><path d="M24 5l1 3 4 0-2 3 1 3-4-1-3 2 0-4-2-2 4-1z" fill="#bfe4ff" /></Ico>],
  ["GitHub Desktop", <span className="flex size-9 items-center justify-center bg-[#1f1c21]"><FaGithub size={31} className="text-white" /></span>, true],
  ["Chrome", <Ico><circle cx="18" cy="18" r="18" fill="#fbc116" /><path d="M18 18L2.400 9A18 18 0 0133.600 9z" fill="#db4437" /><path d="M18 18L2.400 9A18 18 0 0016 36l8-14z" fill="#1e9e51" /><circle cx="18" cy="18" r="9" fill="#fff" /><circle cx="18" cy="18" r="7" fill="#2a76e8" /></Ico>],
  ["Git GUI", <Ico><path d="M20 0v12M12 6h16" stroke="#23b43a" strokeWidth="4" /><path d="M12 16h16" stroke="#d22c2c" strokeWidth="4" /><path d="M28 22H15a3 3 0 00-3 3v6a3 3 0 003 3h11v-7h-6" fill="none" stroke="#333" strokeWidth="3.500" /></Ico>, true],
  ["Terminal", <Ico><rect y="4" width="36" height="28" rx="2" fill="#3b3b3b" /><path d="M0 6a2 2 0 012-2h32a2 2 0 012 2v3H0z" fill="#8a8a8a" /><path d="M5 15l5 5-5 5" fill="none" stroke="#ddd" strokeWidth="2.500" /><rect x="17" y="23" width="12" height="4" fill="#eee" /></Ico>, true],
];

function AppButton({ app, wide }) {
  const [name, icon, running] = app;
  return (
    <button aria-label={name} className={`relative flex h-full items-center justify-center ${wide ? "w-[70px]" : "w-[66px]"}`}>
      {icon}
      {running && <span className="absolute bottom-[7px] left-1/2 -ml-1 h-[5px] w-2 rounded-full bg-[#7b868b]" />}
    </button>
  );
}

function Taskbar() {
  return (
    <footer className="flex h-[72px] items-center border-t-2 border-[#a9b5ba] bg-linear-to-r from-[#dfe9ea] via-[#d7e9f1] via-35% to-[#dae9f2] text-[#1b1b1b]">
      <button className="flex w-[827px] shrink-0 items-center gap-3 pl-7 text-left text-[17px] leading-[25px]">
        <span className="relative block shrink-0">
          <svg width="36" height="36" viewBox="0 0 36 36" className="block" aria-hidden="true">
            <path d="M8 28a8 8 0 01-1-15 11 11 0 0121 2 7 7 0 01-1 13z" fill="#86aaf0" />
            <path d="M8 28a7 7 0 01-2-11c7-3 13 0 15 4 5-3 11 0 11 3l-2 4z" fill="#a9c6f8" />
          </svg>
          <span className="absolute -top-2.5 -right-1 flex size-6 items-center justify-center rounded-full bg-[#c42b1c] text-base leading-none text-white">
            4
          </span>
        </span>
        <span>
          <span className="block">17°F</span>
          <span className="block text-[#5c6366]">Cloudy</span>
        </span>
      </button>
      <button aria-label="Start" className="ml-4 shrink-0">
        <Ico>
          <path d="M0 0h17v17H0zM19 0h17v17H19zM0 19h17v17H0zM19 19h17v17H19z" fill="#0f86dd" />
          <path d="M0 0h17v17H0z" fill="#36b8f5" />
        </Ico>
      </button>
      <label className="ml-[21px] flex h-12 w-[326px] shrink-0 items-center gap-3.5 overflow-hidden rounded-full border border-b-2 border-[#b9cdd3] bg-[#f3f8fb] pl-3.5">
        <Line size={23} sw={2.2}>
          <circle cx="11" cy="10" r="8.500" />
          <path d="M17 16.500l6 6.500" />
        </Line>
        <input
          type="text"
          aria-label="Search"
          placeholder="Search"
          className="min-w-0 flex-1 bg-transparent text-[19px] outline-none placeholder:text-[#5c6366]"
        />
        <svg width="70" height="42" viewBox="0 0 70 42" className="mr-1 shrink-0" aria-hidden="true">
          <defs>
            <linearGradient id="sky" x1="0" x2="1">
              <stop offset="0" stopColor="#6f6fd0" />
              <stop offset=".5" stopColor="#8fb59a" />
              <stop offset="1" stopColor="#3fbf9a" />
            </linearGradient>
          </defs>
          <ellipse cx="35" cy="22" rx="33" ry="19" fill="url(#sky)" opacity=".85" />
          <path d="M22 30l12-16 16 18z" fill="#e29a4e" />
          <path d="M2 34l22-15 16 10 8 2L68 14v14c-1 6-5 11-12 12H9z" fill="#2a2148" />
          <path d="M9 38c14-6 36 0 52-1l-6 4H10z" fill="#14122b" />
          <path d="M14 18l2-2M24 10l1 2M36 7v3M46 10l-1 2M54 16l-2 1" stroke="#fff" strokeWidth="1.500" />
        </svg>
      </label>
      <div className="ml-1 flex h-full shrink-0">
        {APPS.map((a) => (
          <AppButton key={a[0]} app={a} />
        ))}
      </div>
      <div className="ml-0.5 flex h-full shrink-0">
        {APPS_END.map((a) => (
          <AppButton key={a[0]} app={a} wide />
        ))}
      </div>
      <div className="ml-auto flex shrink-0 items-center pr-[30px]">
        <button aria-label="Show hidden icons" className="mr-9">
          <Line size={16} box={16} sw={2}>
            <path d="M1 12l7-7 7 7" />
          </Line>
        </button>
        <button aria-label="Sync" className="mr-6">
          <Line size={24}>
            <path d="M1 12C1 3 13-3 20 5l2 3M22 1v7h-7M2 23v-7h7M2 16c3 5 6 7 11 7" />
            <circle cx="18" cy="18" r="6" fill="#0078d4" stroke="none" />
          </Line>
        </button>
        <button aria-label="Network" className="mr-3">
          <Line size={24}>
            <path d="M16 1H4a3 3 0 00-3 3v12a3 3 0 003 3h16V10M8 19v4M14 19v4M5 23h13" />
            <rect x="17" y="1" width="6" height="8" rx="1" />
            <path d="M20 9v14" />
          </Line>
        </button>
        <button aria-label="Volume" className="mr-6">
          <Line size={24}>
            <path d="M1 9v6h4l5 5V4L5 9zM13 9c2 2 2 4 0 6" />
            <path d="M16 6c4 4 4 8 0 12M19 3c6 6 6 12 0 18" stroke="#a8b6bc" />
          </Line>
        </button>
        <button className="text-right text-[17px] leading-6">
          <span className="block">10:18 PM</span>
          <span className="block">1/4/2025</span>
        </button>
        <button aria-label="Notifications" className="ml-3">
          <Line size={22} sw={0}>
            <path d="M4 17V9a8 8 0 0113-6v5h-5v8h8v1l3 3H1zM8 21h8a4 4 0 01-8 0z" fill="currentColor" />
            <path d="M17 1h6l-6 6h6M13 10h5l-5 5h5" stroke="currentColor" strokeWidth="1.800" />
          </Line>
        </button>
      </div>
    </footer>
  );
}

export default function App() {
  return (
    <div className="flex min-h-screen flex-col overflow-hidden [font-family:'Noto_Sans','Open_Sans',sans-serif]">
      <TabStrip />
      <AddressBar />
      <PortalHeader />
      <Page />
      <Taskbar />
    </div>
  );
}
